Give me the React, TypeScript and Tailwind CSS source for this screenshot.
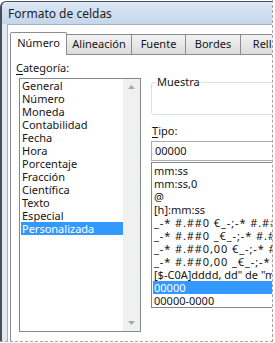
const categorias = [
  "General",
  "Número",
  "Moneda",
  "Contabilidad",
  "Fecha",
  "Hora",
  "Porcentaje",
  "Fracción",
  "Científica",
  "Texto",
  "Especial",
  "Personalizada",
];

const tipos = [
  "mm:ss",
  "mm:ss,0",
  "@",
  "[h]:mm:ss",
  '_-* #.##0 €_-;-* #.##0 €_-;_-* "-" €_-;_-@_-',
  '_-* #.##0 _€_-;-* #.##0 _€_-;_-* "-" _€_-;_-@_-',
  '_-* #.##0,00 €_-;-* #.##0,00 €_-;_-* "-"?? €_-;_-@_-',
  '_-* #.##0,00 _€_-;-* #.##0,00 _€_-;_-* "-"?? _€_-;_-@_-',
  '[$-C0A]dddd, dd" de "mmmm" de "aaaa',
  "00000",
  "00000-0000",
];

const tabs = [
  { label: "Alineación", w: "w-[65px]" },
  { label: "Fuente", w: "w-[54px]" },
  { label: "Bordes", w: "w-[55px]" },
  { label: "Relleno", w: "w-[63px]" },
];

export default function App() {
  return (
    <div className="w-[275px] h-[343px] bg-white overflow-hidden font-['Noto_Sans',sans-serif] text-[11px] text-[#151515]">
      <div className="w-[273px] h-[342px] overflow-hidden border-r border-b border-dashed border-[#a3a3a3]">
        <div className="w-[340px] h-[400px] mt-[1px] flex flex-col rounded-tl-[6px] border-l-2 border-t border-[#4a4f57] bg-[#dfe8f3]">
          {/* title bar */}
          <div className="h-[22px] flex items-center pl-[6px] pt-px rounded-tl-[5px] bg-gradient-to-b from-[#dce7f5] to-[#c5d6eb] text-[12px] text-[#1e1e1e]">
            Formato de celdas
          </div>

          {/* client area */}
          <div className="flex-1 ml-[5px] border-l border-t border-[#a7b0bb] bg-white pt-[7px] pl-[2px]">
            {/* tabs */}
            <div className="flex items-end h-[22px]">
              <div className="relative z-10 -mb-px h-[23px] w-[57px] bg-white border-l border-t border-r border-[#898c95] rounded-t-[2px] flex items-center justify-center pb-[2px]">
                Número
              </div>
              {tabs.map((t) => (
                <div
                  key={t.label}
                  className={`h-[20px] ${t.w} shrink-0 border-t border-r border-[#898c95] bg-gradient-to-b from-[#f3f3f3] to-[#dcdcdc] flex items-center justify-center`}
                >
                  {t.label}
                </div>
              ))}
            </div>

            {/* panel */}
            <div className="border-l border-t border-[#898c95] bg-white h-[300px] flex pt-[6px] pl-[5px]">
              {/* left column */}
              <div className="flex flex-col w-[126px] shrink-0">
                <div className="h-[14px] leading-[14px]">
                  <span className="underline underline-offset-2">C</span>ategoría:
                </div>
                <div className="mt-[3px] ml-[3px] h-[254px] w-[122px] border border-[#828790] flex">
                  <div className="flex-1 flex flex-col pl-px">
                    {categorias.map((c) => (
                      <div
                        key={c}
                        className={`h-[13px] leading-[13px] pl-[1px] ${
                          c === "Personalizada" ? "bg-[#3399ff] text-white" : ""
                        }`}
                      >
                        {c}
                      </div>
                    ))}
                  </div>
                  <div className="w-[17px] bg-[#f0f0f0] flex flex-col justify-between items-center py-[6px]">
                    <svg width="7" height="4" viewBox="0 0 7 4">
                      <path d="M0 4 L3.5 0 L7 4 Z" fill="#a8a8a8" />
                    </svg>
                    <svg width="7" height="4" viewBox="0 0 7 4">
                      <path d="M0 0 L3.5 4 L7 0 Z" fill="#a8a8a8" />
                    </svg>
                  </div>
                </div>
              </div>

              {/* right column */}
              <div className="flex flex-col ml-[9px] flex-1">
                <div className="relative mt-[21px] h-[33px] border border-[#d5dfe5] rounded-[3px]">
                  <span className="absolute -top-[8px] left-[4px] bg-white px-[1px] leading-[14px]">
                    Muestra
                  </span>
                </div>
                <div className="mt-[9px] h-[14px] leading-[14px] pl-px">
                  <span className="underline underline-offset-2">T</span>ipo:
                </div>
                <div className="mt-[3px] h-[20px] border border-[#abadb3] flex items-center pl-[3px]">
                  00000
                </div>
                <div className="mt-[1px] h-[146px] border border-[#828790] pt-px pl-px flex flex-col">
                  {tipos.map((t) => (
                    <div
                      key={t}
                      className={`h-[13px] leading-[13px] pl-px whitespace-nowrap ${
                        t === "00000" ? "bg-[#3399ff] text-white" : ""
                      } ${t.startsWith("_-*") ? "tracking-[0.9px]" : ""}`}
                    >
                      {t}
                    </div>
                  ))}
                </div>
              </div>
            </div>
          </div>
        </div>
      </div>
    </div>
  );
}
